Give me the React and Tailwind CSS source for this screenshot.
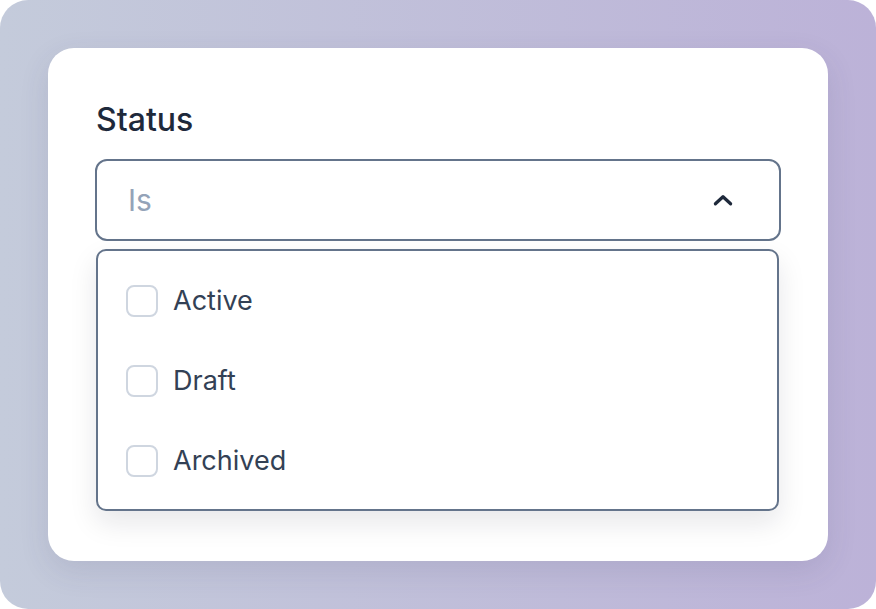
import { useState } from 'react';

const options = ['Active', 'Draft', 'Archived'];

// Chevron up
const ChevronUp = () => (
  <svg width="26" height="26" viewBox="0 0 24 24" fill="none" stroke="#1e293b" strokeWidth="3" strokeLinecap="round" strokeLinejoin="round">
    <path d="M5 15.5l7-6.5 7 6.5" />
  </svg>
);

export default function App() {
  const [checked, setChecked] = useState({});

  return (
    <div className="w-[876px] h-[609px] bg-white" style={{ fontFamily: 'Inter, "Noto Sans", sans-serif' }}>
      <div className="w-full h-full rounded-[28px] bg-gradient-to-r from-[#c4cbdb] to-[#bcb2d8] p-12">
        <div className="w-full h-full bg-white rounded-[26px] shadow-[0_10px_30px_rgba(60,60,100,0.12)] px-12 pt-[52px]">
          <label className="block text-[32px] leading-[40px] font-medium text-[#1e293b]">Status</label>

          <button className="mt-[19px] w-[686px] -ml-px h-[82px] rounded-[12px] border-2 border-[#64748b] flex items-center justify-between pl-[31px] pr-[43px]">
            <span className="text-[30px] text-[#94a3b8]">Is</span>
            <ChevronUp />
          </button>

          <div className="mt-2 w-[683px] rounded-[10px] border-2 border-[#64748b] bg-white shadow-[0_12px_28px_rgba(15,23,42,0.10)] pt-[10px] pb-[8px]">
            {options.map(opt => (
              <label key={opt} className="h-20 flex items-center pl-7 gap-[15px] cursor-pointer">
                <span
                  onClick={() => setChecked(c => ({ ...c, [opt]: !c[opt] }))}
                  className="w-8 h-8 rounded-[8px] border-2 border-[#cfd6e0] bg-white"
                />
                <span className="text-[27px] text-[#334155]">{opt}</span>
              </label>
            ))}
          </div>
        </div>
      </div>
    </div>
  );
}
